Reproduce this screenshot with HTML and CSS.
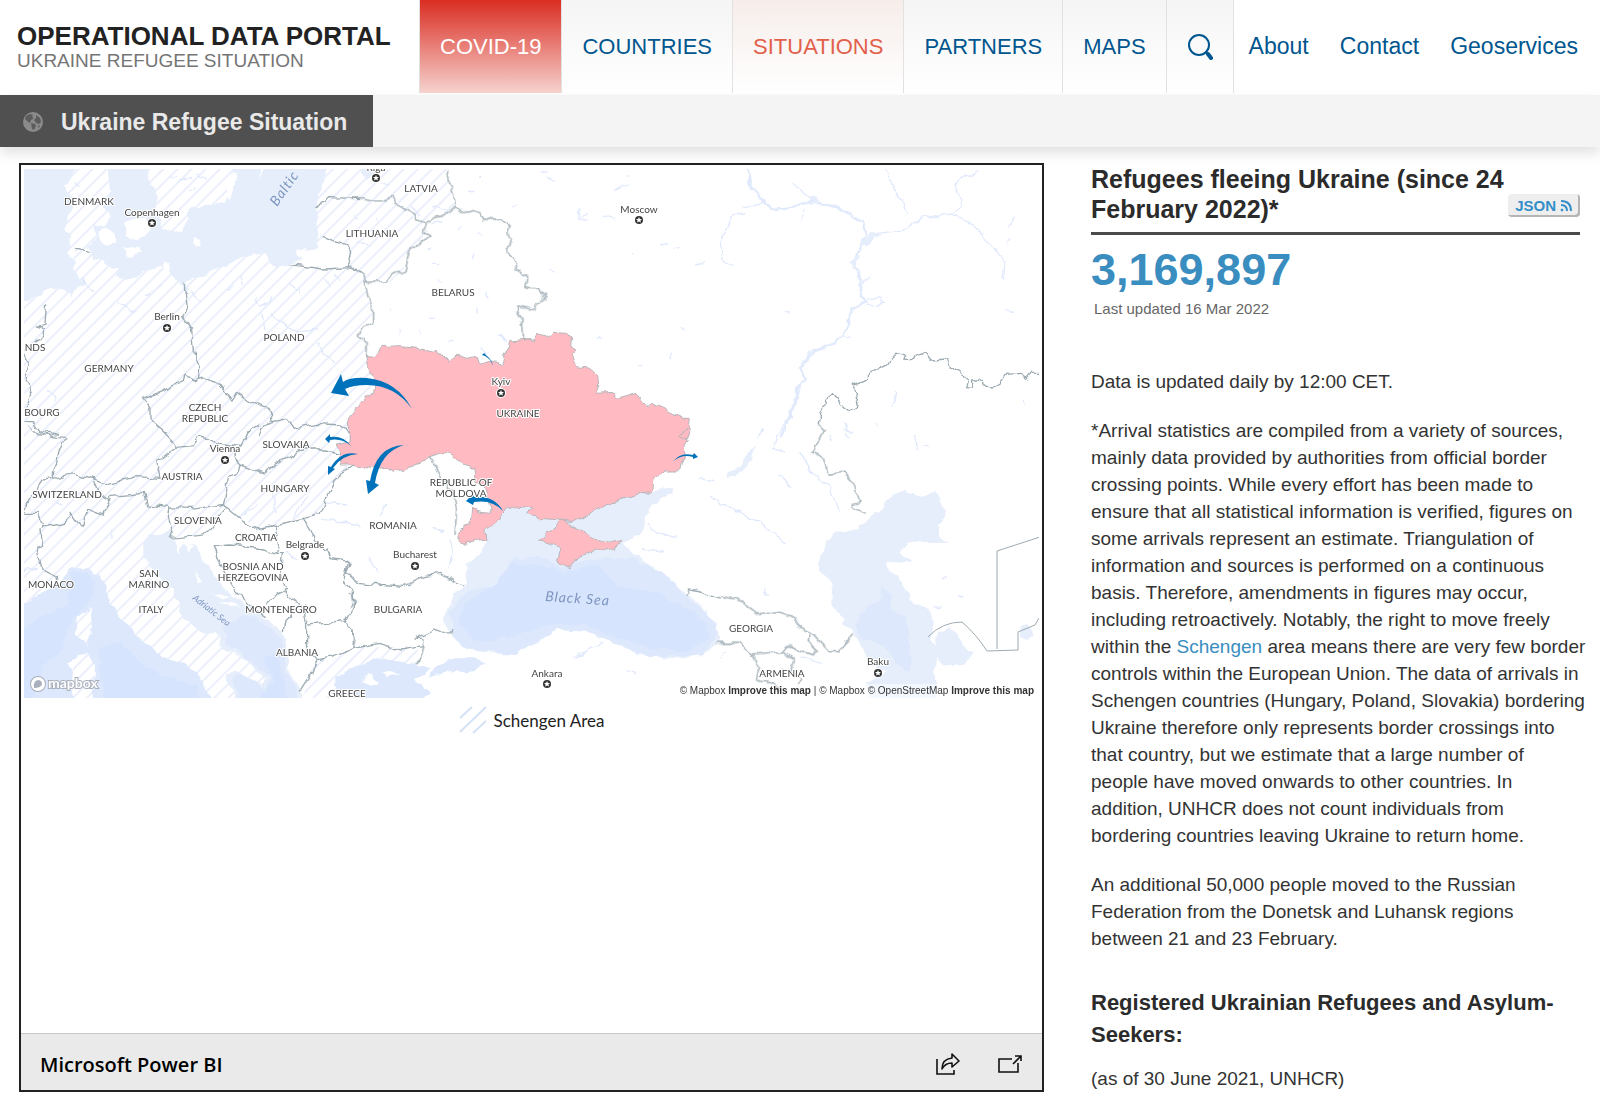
FILE: index.html
```html
<!DOCTYPE html>
<html lang="en">
<head>
    <meta charset="UTF-8">
    <meta name="viewport" content="width=device-width, initial-scale=1.0">
    <title>Situation Ukraine Refugee Situation</title>
    <link rel="stylesheet" href="styles.css">
</head>
<body>
    <header class="header">
        <div class="topbar">
            <div class="brand">
                <div class="brand-title">OPERATIONAL DATA PORTAL</div>
                <div class="brand-subtitle">UKRAINE REFUGEE SITUATION</div>
            </div>
            <nav class="nav">
                <a class="nav-item nav-covid" href="#">COVID-19</a>
                <a class="nav-item" href="#">COUNTRIES</a>
                <a class="nav-item nav-active" href="#">SITUATIONS</a>
                <a class="nav-item" href="#">PARTNERS</a>
                <a class="nav-item" href="#">MAPS</a>
                <button class="nav-item nav-search" type="button" aria-label="Search">
                    <svg width="26" height="28" viewBox="0 0 26 28" fill="none" stroke="#00568f" stroke-linecap="round">
                        <circle cx="12" cy="12" r="10" stroke-width="2"/>
                        <path d="M19 19l2 2" stroke-width="2"/>
                        <path d="M21 21l3 4" stroke-width="4"/>
                    </svg>
                </button>
            </nav>
            <nav class="links">
                <a href="#">About</a>
                <a href="#">Contact</a>
                <a href="#">Geoservices</a>
            </nav>
        </div>
        <div class="subbar">
            <a class="tab" href="#">
                <svg width="20" height="20" viewBox="0 0 20 20">
                    <circle cx="10" cy="10" r="10" fill="#8b8b8b"/>
                    <path d="M3 4l4-2 3 1-1 2 2 1-3 2-1 3-3-2-2-2zM8 11l4 1 1 2-2 4-2-1zM13 3l4 3 1 4-2 2-3-1-2-3 2-2zM15 14l2-1-1 3z" fill="#5c5c5c"/>
                </svg>
                <span>Ukraine Refugee Situation</span>
            </a>
        </div>
    </header>

    <main class="content">
        <section class="report">
            <div class="map">
                <svg class="map-canvas" viewBox="24 169 1015 529" role="img" aria-label="Refugee movements from Ukraine">
                    <defs>
                        <pattern id="hatch" width="10" height="10" patternUnits="userSpaceOnUse" patternTransform="rotate(45)">
                            <path d="M5 0V10" stroke="#d8e0fa" stroke-width="1"/>
                        </pattern>
                        <filter id="rough" filterUnits="userSpaceOnUse" x="0" y="150" width="1060" height="570">
                            <feTurbulence type="fractalNoise" baseFrequency="0.09" numOctaves="2" seed="4"/>
                            <feDisplacementMap in="SourceGraphic" scale="8" xChannelSelector="R" yChannelSelector="G"/>
                        </filter>
                        <g id="city">
                            <circle r="5" fill="#fff"/>
                            <circle r="4" fill="#333"/>
                            <path d="M0-3L.9-1 3-.9 1.4.5 1.9 2.6 0 1.5-1.9 2.6-1.4.5-3-.9-.9-1z" fill="#fff"/>
                        </g>
                    </defs>

                    <!-- Schengen area -->
                    <path fill="url(#hatch)" d="M14 159H447V180L456 207 423 223 430 235 410 252 403 270 390 282 365 282 373 308V323L358 335 367 347V355L375 385 350 415V433L338 452 352 465 340 473 325 502 317 515 277 525 257 528 227 508 205 535 172 538 180 600 250 640 290 710H14z"/>
                    <path fill="url(#hatch)" d="M312 662L360 647 417 647 420 658 400 710H300z"/>

                    <g filter="url(#rough)">
                        <!-- north west seas -->
                        <g transform="translate(10 155) scale(.3333)">
                            <path class="sea" d="M12 12H215L165 95 175 120 190 130 180 170 165 220 180 250 175 290 195 320 185 340 200 350 210 380 235 385 225 395 190 400 180 425 150 400 110 405 90 425 12 440z"/>
                            <path class="sea" d="M290 12H405L420 90 440 105 445 130 430 150 445 190 455 225 490 230 520 225 530 190 525 175 550 155 610 150 640 140 650 110 665 70 680 12H942L940 80 920 160 920 230 930 275 910 285 860 280 858 300 885 315 840 330 800 340 780 320 765 290 700 305 640 335 580 360 550 375 530 385 540 410 520 400 500 375 480 350 455 335 400 350 370 370 340 375 320 360 330 340 290 335 270 320 245 310 245 290 235 275 250 260 260 240 250 215 285 215 300 190 285 150 300 110z"/>
                            <path class="land" d="M345 205L365 190 410 190 425 220 400 245 375 255 350 240zM265 230L290 220 315 240 315 265 290 270 270 255zM340 280L390 275 395 295 360 305zM550 248L573 255 570 272 555 268zM655 140L684 60 672 50 645 110zM455 320L485 325 480 350 460 345zM750 12H765L755 72zM858 282L915 286 932 277 940 245 965 260 1010 268 1025 290 1015 338 940 342 838 328 885 315z"/>
                            <path class="lake" d="M480 70L500 60M510 85L530 65M520 75L550 70M560 60L590 80M540 110L560 95M190 80L210 95M950 370L960 400M975 360L990 380M840 380L860 410M870 400L865 420M690 360L700 390M650 410L670 390M405 420L430 405M440 400L450 390M540 410L570 440"/>
                            <path class="river" d="M210 370L250 410M320 445L380 475M780 475L820 505 870 530 925 525M925 565L945 600 970 625M735 430L755 460 790 425M755 480L765 520M110 705L140 735"/>
                        </g>
                        <!-- Adriatic and Tyrrhenian -->
                        <g transform="translate(10 425) scale(.3333)">
                            <path class="mid" d="M12 550L90 510 150 470 190 430 240 430 280 465 300 540 340 585 390 640 460 695 510 710 560 740 590 790 620 850H12z"/>
                            <path class="deep" d="M12 620L130 560 170 540 190 440 230 440 260 470 230 540 180 590 150 680 100 720 60 850H12zM265 670L330 650 400 720 480 760 560 780 570 850H290L270 750z"/>
                            <path class="land" d="M240 545L245 600 230 660 195 630 200 575 235 560zM230 680L255 720 250 850H185L195 740 170 710z"/>
                            <path class="sea" d="M400 345L420 335 480 315 495 345 510 390 520 350 560 370 600 430 650 500 720 545 760 575 815 625 835 680 830 720 870 790 880 850H680L670 800 650 760 660 740 700 745 760 785 768 760 700 700 625 660 630 630 570 620 520 575 490 500 430 430 400 400z"/>
                            <path class="mid" d="M640 610L700 570 760 590 810 640 820 720 860 790 860 850H700L680 800 670 755 700 750 765 795 780 755 700 690 650 660z"/>
                            <path class="deep" d="M760 700L800 690 820 760 840 850H730L760 800 790 770z"/>
                            <path class="land" d="M525 350L545 365 540 385zM550 440L580 470 570 475zM600 500L660 520 640 525zM630 530L690 545 660 550z"/>
                            <path class="river" d="M690 270L740 240M795 180V265M850 275L890 210M20 440L80 430M130 230L160 240M305 310L310 340M950 230L1010 240M940 280L1050 300M830 380L860 400"/>
                        </g>
                        <!-- Black Sea, Azov, Aegean -->
                        <g transform="translate(350 425) scale(.3333)">
                            <path class="sea" d="M500 240L560 240 570 280 640 290 700 275 760 240 850 205 905 200 965 185 965 205 900 240 890 280 870 330 820 350 850 385 900 420 950 450 1005 505 1065 550 1100 600 1105 650 1060 690 980 700 900 695 850 680 800 655 750 640 720 620 620 615 540 650 500 690 420 685 340 670 300 620 275 580 300 545 310 510 345 480 350 420 395 385 410 350 405 320 440 290 470 250z"/>
                            <path class="mid" d="M490 400L570 395 640 425 740 400 850 400 950 450 1000 510 1070 560 1105 620 1060 690 900 695 800 655 720 620 620 615 500 690 340 670 310 630 300 560 350 500 430 480z"/>
                            <path class="deep" d="M480 420L570 420 640 440 740 415 800 480 900 500 1000 540 1060 590 1080 640 1000 680 900 670 800 640 720 600 600 600 500 630 380 650 330 600 340 540 400 500 440 470z"/>
                            <path class="mid" d="M-45 760L0 730 90 700 180 715 240 730 195 770 240 800 200 850H-30zM250 735L300 700 380 700 410 715 370 735 300 745 240 755z"/>
                            <path class="land" d="M30 765L60 750 90 770 60 780zM90 740L150 745 110 755z"/>
                            <path class="river" d="M240 300L280 320M300 340L310 380 300 430M60 400L80 440M90 270L110 240M670 700L720 670 760 655M830 740L860 745M1090 170L1050 160M890 300L930 330 980 330M880 370L940 380"/>
                        </g>
                        <!-- Caspian Sea -->
                        <g transform="translate(710 425) scale(.3333)">
                            <path class="sea" d="M585 198L620 212 680 208 710 255 690 300 690 335 725 352 600 350 570 385 600 415 530 410 528 430 570 460 600 525 660 555 672 590 665 640 685 680 675 740 678 850H470L475 770 530 740 480 720 450 650 400 590 365 530 365 480 320 420 345 360 370 325 440 315 500 265 540 215z"/>
                            <path class="sea" d="M680 630L720 605 745 630 755 665 790 690 770 715 700 722 675 690zM930 600L960 595 970 630 945 650 925 635zM50 160L60 140 90 130 100 100 140 62 110 125 100 145 75 150z"/>
                            <path class="mid" d="M515 490L545 510 545 550 590 580 600 640 600 735 580 735 520 660 460 640 440 610 445 570 510 530z"/>
                            <path class="river" d="M220 0L190 70 225 82M0 210L30 242 80 255 160 300 230 355M270 85L300 135 360 190 395 265M205 150L240 185M270 700L340 715M30 700L50 680M150 40L160 15M620 30L625 80M165 490L172 510M220 730L250 745M670 550L690 545"/>
                            <path class="lake" d="M360 30L365 45M400 10L430 20M405 25L420 35M640 60L655 70M750 515L760 520M695 458L710 458"/>
                        </g>
                        <!-- Volga basin -->
                        <g transform="translate(710 155) scale(.3333)">
                            <path class="volga" d="M105 12L120 90 165 140 195 165 270 150 310 135 385 158 430 190 455 195 470 240 450 275 430 330 455 385 450 425 470 440 425 460 400 540 375 565 310 590 270 640 285 670 265 700 265 725 240 770 215 850"/>
                            <path class="sea" d="M450 270L490 230 510 240 480 270zM418 315L450 300 440 330 425 345zM295 125L320 125 335 150zM645 185L675 175 690 190 660 190zM445 390L485 358 460 390zM290 590L312 590 300 602z"/>
                            <path class="river" d="M500 235L590 225 605 205 650 185 730 180 800 215 830 260 860 290 885 320 880 370M730 180L755 150 735 90 760 65 805 50M518 12L545 90 570 130 595 175M105 172L60 190 30 260 40 320 70 332M165 140L100 158M245 85L310 135M290 165L275 200M470 430L510 428 520 445 500 458 470 450M895 220L920 180M890 265L900 250M885 460L915 480M225 465L237 472 237 480M400 545L420 550M545 755L555 715M940 735L942 748M500 805L510 810M400 800L420 830"/>
                        </g>
                        <!-- small lakes of the Baltics, Belarus and Russia -->
                        <g transform="translate(350 155) scale(.3333)">
                            <path class="sea" d="M28 12H100L90 60 55 72 30 60z"/>
                            <path class="lake" d="M575 50L600 45M590 70L615 75M790 105L835 85M825 60L835 55M685 165L690 190 720 180M700 195L715 195M755 180L790 195M600 340L615 355M1030 330L1065 325M930 270L960 265M970 285L985 280M850 290L845 298M490 160L500 148M385 70L395 60M355 110L370 105M250 325L265 325M375 300L370 315M265 375L275 378M385 235L400 245M330 215L325 225M230 290L240 285M185 155L210 180M250 150L290 165M245 205L275 200M120 460L125 465M145 525L152 535M230 490L250 490M380 455L382 475M450 540L465 565M295 560L310 560M205 525L210 535M410 415L415 430M990 510L1000 520M960 610L965 590M745 545L755 545M870 625L880 625M80 190L85 200M20 265L60 270M15 185L30 195"/>
                            <path class="river" d="M90 80L120 90M450 540L470 565M395 575L410 605"/>
                        </g>

                        <!-- Ukraine -->
                        <g class="ukraine">
                            <path transform="translate(350 155) scale(.3333)" d="M-5 860V790L55 720 75 710 70 665 55 635 50 600 75 605 95 575 150 572 200 577 260 590 262 602 290 605 295 615 320 600 345 612 378 605 385 625 420 615 440 620 455 635 462 600 480 562 530 555 555 560 565 535 590 545 610 532 648 535 665 555 662 575 683 590 665 603 678 635 720 640 740 660 745 715 790 712 810 730 860 715 890 758 905 745 960 770 1000 790 1018 790 1015 815 1020 830 1008 860"/>
                            <path transform="translate(350 425) scale(.3333)" d="M1010 10L990 35 1012 45 1000 65 1003 100 995 135 940 135 910 160 905 200 860 205 800 225 760 240 730 260 700 275 670 290 630 285 570 280 530 268 545 245 500 240 470 250 440 290 405 318 408 345 375 350 345 358 320 340 335 315 360 295 365 250 390 258 420 262 415 225 400 180 378 170 375 128 335 115 300 90 280 83 235 95 210 115 130 145 100 125 60 130 0 120 -25 120 -35 85 -35 60 -5 50 -5 10"/>
                            <path transform="translate(350 425) scale(.3333)" d="M568 345L600 320 640 285 665 300 700 315 725 345 770 350 810 340 800 370 765 375 740 375 700 390 660 428 625 410 635 370 610 355z"/>
                        </g>

                        <!-- borders -->
                        <g class="border">
                            <path transform="translate(10 155) scale(.3333)" d="M400 730L440 715 520 680 525 660 550 675 580 665 640 700 665 740 680 715 730 750 780 765 790 800 830 790 850 820 920 805 990 810 1015 830M400 730L420 760 420 790 440 810 470 835M790 800L760 810 745 840M522 382L532 460 518 485 545 520 550 590 570 640 565 672M110 448L105 505 80 510 100 520 100 545 80 565M42 600L52 625 42 660 62 715 45 770M42 800L70 800 90 828 150 838M192 283L215 285 240 292M835 328L940 342 1015 338 1025 290 1010 268 965 260 935 245M920 162L950 128 1050 130M1015 338L1050 348"/>
                            <path transform="translate(350 155) scale(.3333)" d="M0 130L30 128 60 138 100 138 125 125 135 148 170 160 200 185 220 205 250 190 285 185 318 155 350 172 375 165 395 198 430 185 460 195 480 215 472 240 482 265 468 292 490 310 500 345 530 365 528 395 565 400 585 432 545 465 500 455 500 470 518 500 520 545 528 558M297 42L288 80 305 95 318 155M220 205L218 235 240 242 225 255 180 285 165 345 120 368 110 380 45 382M0 335L42 358 50 410 68 460 68 505 30 525 25 540 52 565 50 605"/>
                            <path transform="translate(10 425) scale(.3333)" d="M60 5L70 20 165 38 150 70 130 150 130 160 95 165 80 200 50 230 45 265 85 265 100 305 165 295 180 260 212 305 235 250 280 268 300 220 270 205 250 160 190 145 130 160M250 160L290 175 380 155 450 160 440 110 500 70 495 55 440 0M500 70L550 65 570 35 630 55 665 60 690 65 720 20 750 0M690 65L675 90 690 120 760 145 830 100 880 75 950 75 985 85M690 120L685 145 655 155 650 200 640 235 545 250 480 248 410 240 400 205 300 215M480 248L475 270 490 330 485 340 585 330 600 310 650 250 640 235M650 250L700 290 740 312 800 300 880 280 930 270 960 200 990 145 1030 120M100 305L90 315 95 365 80 370 95 430 140 455 130 470M770 575L730 550 680 500 625 405 610 365 660 360 760 372 800 385 820 385 815 440 830 490 790 510 770 545M795 300L805 360 800 385M880 280L905 320 910 350 950 370 960 400 1015 410 1000 470 1030 500 1030 545 1005 590 895 600M820 490L840 520 880 540 890 600 890 670 920 700 905 745 870 800M1005 590L1030 630 1030 670 980 690 920 705M845 570L825 590 820 625M1005 405L1020 415 1010 440 1035 470 1050 465"/>
                            <path transform="translate(350 425) scale(.3333)" d="M235 95L260 130 270 155 310 200 320 250 315 330M0 445L15 470 90 480 160 488 220 455 270 448 340 480M0 510L15 525 0 545M0 615L15 640 10 670 90 655 150 675 200 668 225 665 215 640 195 640 250 615 270 622 308 620M225 665L212 700 192 718M1007 510L1015 492 1050 498 1110 520"/>
                            <path transform="translate(710 155) scale(.3333)" d="M990 652L965 652 950 670 930 655 890 658 870 685 843 700 810 675 785 675 785 700 770 698 775 675 725 640 715 615 665 618 648 592 615 605 610 615 585 612 590 600 558 592 545 605 530 630 475 655 475 675 430 695 445 750 420 770 400 755 368 712 352 735 355 750 330 768 325 810"/>
                            <path transform="translate(710 425) scale(.3333)" d="M325 0L340 20 308 82 340 100 355 148 400 142 430 175 453 230 425 235 430 248 465 265M30 512L90 525 150 572 210 562 262 580 260 605 320 635 360 680 385 680 410 655 428 628M18 655L85 655 130 687 220 680 235 662 310 690 318 670 295 650 298 628M130 687L145 730 140 765 180 775 210 795M220 680L250 705 240 735 275 765 265 780"/>
                        </g>
                    </g>
                    <path class="border border-straight" d="M1040 537L997 551V649M928 637Q942 622 962 622 976 634 987 651L1018 650V632L1035 625 1039 618"/>
                    <!-- Corsica and Sardinia -->
                    <path fill="url(#hatch)" d="M90 607L92 625 87 645 75 635 77 617 88 612zM87 652L95 665 93 710H72L75 672 67 662z"/>

                    <!-- movement arrows -->
                    <g fill="#0072bc">
                        <path d="M331 393L341 374 343 382Q350 377 367 378 397 381 412 409 395 385 367 385 353 385 345 389L349 396z"/>
                        <path d="M404 445Q376 446 370 481L366 480 368 494 379 485 375 483Q380 452 404 445z"/>
                        <path d="M503 511Q494 495 474 497L473 494 466 501 473 505 474 502Q492 499 503 511z"/>
                        <path d="M351 446Q343 435 330 437L330 434 325 439 329 443 330 440Q342 438 351 446z"/>
                        <path d="M358 454Q341 450 331 467L328 466 328 475 335 469 333 468Q342 455 358 454z"/>
                        <path d="M674 461Q680 452 693 455L694 453 698 457 693 459 693 457Q682 454 674 461z"/>
                        <path d="M493 366Q490 358 485 356L482 355 484 353 487 356Q492 360 493 366z"/>
                    </g>

                    <g>
                        <use href="#city" x="152" y="223"/>
                        <use href="#city" x="167" y="328"/>
                        <use href="#city" x="376" y="178"/>
                        <use href="#city" x="639" y="220"/>
                        <use href="#city" x="501" y="393"/>
                        <use href="#city" x="225" y="460"/>
                        <use href="#city" x="305" y="556"/>
                        <use href="#city" x="415" y="566"/>
                        <use href="#city" x="547" y="684"/>
                        <use href="#city" x="878" y="673"/>
                    </g>

                    <g class="label">
                        <text x="89" y="205">DENMARK</text>
                        <text x="152" y="216">Copenhagen</text>
                        <text x="167" y="320">Berlin</text>
                        <text x="284" y="341">POLAND</text>
                        <text x="109" y="372">GERMANY</text>
                        <text x="35" y="351">NDS</text>
                        <text x="42" y="416">BOURG</text>
                        <text x="205" y="411">CZECH</text>
                        <text x="205" y="422">REPUBLIC</text>
                        <text x="376" y="171">Riga</text>
                        <text x="421" y="192">LATVIA</text>
                        <text x="372" y="237">LITHUANIA</text>
                        <text x="639" y="213">Moscow</text>
                        <text x="453" y="296">BELARUS</text>
                        <text x="501" y="385">Kyiv</text>
                        <text x="518" y="417">UKRAINE</text>
                        <text x="286" y="448">SLOVAKIA</text>
                        <text x="225" y="452">Vienna</text>
                        <text x="182" y="480">AUSTRIA</text>
                        <text x="285" y="492">HUNGARY</text>
                        <text x="67" y="498">SWITZERLAND</text>
                        <text x="198" y="524">SLOVENIA</text>
                        <text x="256" y="541">CROATIA</text>
                        <text x="305" y="548">Belgrade</text>
                        <text x="253" y="570">BOSNIA AND</text>
                        <text x="253" y="581">HERZEGOVINA</text>
                        <text x="149" y="577">SAN</text>
                        <text x="149" y="588">MARINO</text>
                        <text x="51" y="588">MONACO</text>
                        <text x="151" y="613">ITALY</text>
                        <text x="281" y="613">MONTENEGRO</text>
                        <text x="297" y="656">ALBANIA</text>
                        <text x="347" y="697">GREECE</text>
                        <text x="393" y="529">ROMANIA</text>
                        <text x="461" y="486">REPUBLIC OF</text>
                        <text x="461" y="497">MOLDOVA</text>
                        <text x="415" y="558">Bucharest</text>
                        <text x="398" y="613">BULGARIA</text>
                        <text x="547" y="677">Ankara</text>
                        <text x="751" y="632">GEORGIA</text>
                        <text x="782" y="677">ARMENIA</text>
                        <text x="878" y="665">Baku</text>
                    </g>
                    <g class="water-label">
                        <text transform="translate(277 207) rotate(-55)">Baltic</text>
                        <text transform="translate(545 601) rotate(4)">Black Sea</text>
                        <text class="water-small" transform="translate(192 599) rotate(38)">Adriatic Sea</text>
                    </g>

                    <g class="mapbox-logo">
                        <circle cx="38" cy="684" r="7"/>
                        <path class="mapbox-mark" d="M34 688Q33 680 39 680 42 681 42 684 41 688 34 688z"/>
                        <text x="48" y="688">mapbox</text>
                    </g>
                </svg>
                <div class="attribution">
                    <a href="#">© Mapbox</a> <a class="improve" href="#">Improve this map</a> | <a href="#">© Mapbox</a> <a href="#">© OpenStreetMap</a> <a class="improve" href="#">Improve this map</a>
                </div>
            </div>

            <div class="legend">
                <svg width="28" height="28" viewBox="0 0 28 28" stroke="#d4e2f8" stroke-width="2">
                    <path d="M1 12L13 1M1 26L27 1M14 27L27 15"/>
                </svg>
                <span>Schengen Area</span>
            </div>

            <footer class="report-footer">
                <a class="report-title" href="#">Microsoft Power BI</a>
                <div class="report-actions">
                    <button class="icon-btn" type="button" aria-label="Share">
                        <svg width="26" height="24" viewBox="0 0 26 24" fill="none" stroke="#111" stroke-width="1.6">
                            <path d="M2 7V22H19V18"/>
                            <path d="M7 17Q7 7 17 6V2L24 9 17 15V11Q10 11 7 17z" stroke-linejoin="round"/>
                        </svg>
                    </button>
                    <button class="icon-btn" type="button" aria-label="Full screen">
                        <svg width="26" height="24" viewBox="0 0 26 24" fill="none" stroke="#111" stroke-width="1.6">
                            <path d="M15 7H2V20H21V11M16 12L24 4M18 4H24V9"/>
                        </svg>
                    </button>
                </div>
            </footer>
        </section>

        <aside class="sidebar">
            <div class="figure-head">
                <h2>Refugees fleeing Ukraine (since 24 February 2022)*</h2>
                <button class="json-btn" type="button">JSON
                    <svg width="13" height="13" viewBox="0 0 13 13" fill="none" stroke="#338ec9" stroke-width="2">
                        <circle cx="2" cy="11" r="1" fill="#338ec9" stroke-width="1"/>
                        <path d="M1 6Q7 6 7 12M1 2Q11 2 11 12"/>
                    </svg>
                </button>
            </div>
            <div class="total">3,169,897</div>
            <div class="updated">Last updated 16 Mar 2022</div>

            <div class="notes">
                <p>Data is updated daily by 12:00 CET.</p>
                <p>*Arrival statistics are compiled from a variety of sources, mainly data provided by authorities from official border crossing points. While every effort has been made to ensure that all statistical information is verified, figures on some arrivals represent an estimate. Triangulation of information and sources is performed on a continuous basis. Therefore, amendments in figures may occur, including retroactively. Notably, the right to move freely within the <a href="#">Schengen</a> area means there are very few border controls within the European Union. The data of arrivals in Schengen countries (Hungary, Poland, Slovakia) bordering Ukraine therefore only represents border crossings into that country, but we estimate that a large number of people&nbsp;have moved onwards to other countries. In addition, UNHCR does not count individuals from bordering&nbsp;countries leaving Ukraine to return home.</p>
                <p>An additional 50,000 people moved to the Russian Federation from the Donetsk and Luhansk regions between 21 and 23 February.</p>
                <h3>Registered Ukrainian Refugees and Asylum-Seekers:</h3>
                <p>(as of 30 June 2021, UNHCR)</p>
            </div>
        </aside>
    </main>
</body>
</html>
```

FILE: styles.css
```css
* {
    margin: 0;
    padding: 0;
    box-sizing: border-box;
}

body {
    font-family: "Liberation Sans", Arial, sans-serif;
    background: #fff;
    color: #333;
}

a {
    color: inherit;
    text-decoration: none;
}

button {
    font-family: inherit;
    cursor: pointer;
}

/* Header */

.topbar {
    display: flex;
    height: 93px;
}

.brand {
    flex: 0 0 419px;
    padding: 21px 0 0 17px;
    white-space: nowrap;
}

.brand-title {
    font-size: 26px;
    font-weight: bold;
    line-height: 30px;
    color: #222;
}

.brand-subtitle {
    font-size: 19px;
    line-height: 20px;
    color: #757575;
}

.nav {
    display: flex;
    border-left: 1px solid #e2e2e2;
}

.nav-item {
    display: flex;
    align-items: center;
    padding: 0 20px;
    border: 0;
    border-right: 1px solid #e2e2e2;
    background: linear-gradient(#f5f5f5, #fff);
    color: #00568f;
    font-size: 22px;
}

.nav-covid {
    background: linear-gradient(#da2d22, #f6d2ce);
    color: #fff;
}

.nav-active {
    background: linear-gradient(#f6edea, #fff);
    color: #e2604a;
}

.links {
    display: flex;
    flex: 1;
    align-items: center;
    justify-content: space-between;
    padding: 0 22px 0 15px;
    color: #00568f;
    font-size: 23px;
}

.subbar {
    display: flex;
    height: 52px;
    margin-top: 2px;
    background: #f4f4f4;
    box-shadow: 0 6px 12px rgba(0, 0, 0, 0.12);
}

.tab {
    display: flex;
    align-items: center;
    gap: 18px;
    padding: 2px 26px 0 23px;
    background: #505050;
    color: #e9e9e9;
    font-size: 23px;
    font-weight: bold;
}

/* Page body */

.content {
    display: grid;
    grid-template-columns: 1025fr 496fr;
    align-items: start;
    gap: 47px;
    padding: 16px 13px 0 19px;
}

.report {
    display: flex;
    flex-direction: column;
    min-height: calc(100vh - 184px);
    border: 2px solid #222;
    background: #fff;
}

.map {
    position: relative;
    margin: 4px 3px 0;
}

.map-canvas {
    display: block;
    width: 100%;
}

.sea {
    fill: #e6eefc;
}

.mid {
    fill: #dde8fd;
}

.deep {
    fill: #d6e4fe;
}

.land {
    fill: #fff;
}

.river,
.lake {
    fill: none;
    stroke: #dfe8fc;
    stroke-width: 4;
}

.volga {
    fill: none;
    stroke: #e1eafc;
    stroke-width: 8;
}

.ukraine {
    fill: #ffbbc1;
    stroke: #b5b5bb;
    stroke-width: 3;
}

.border {
    fill: none;
    stroke: #9caab2;
    stroke-width: 4;
}

.border-straight {
    stroke-width: 1;
}

.label {
    fill: #444;
    stroke: #fff;
    stroke-width: 2px;
    stroke-linejoin: round;
    paint-order: stroke;
    font-family: Lato, sans-serif;
    font-size: 10px;
    text-anchor: middle;
}

.water-label {
    fill: #7d95bf;
    font-family: Lato, sans-serif;
    font-size: 14px;
    font-style: italic;
    letter-spacing: 1px;
}

.water-small {
    font-size: 9px;
    letter-spacing: 0;
}

.mapbox-logo {
    fill: #fff;
    stroke: #a9afbc;
    stroke-width: 2px;
    paint-order: stroke;
    font-family: Lato, sans-serif;
    font-size: 14px;
    font-weight: bold;
}

.mapbox-mark {
    fill: #a9afbc;
    stroke: none;
}

.attribution {
    position: absolute;
    right: 0;
    bottom: 0;
    padding: 0 5px;
    background: rgba(255, 255, 255, 0.5);
    color: #333;
    font-size: 10px;
    line-height: 14px;
    white-space: nowrap;
}

.improve {
    font-weight: bold;
}

.legend {
    display: flex;
    align-items: center;
    justify-content: center;
    gap: 7px;
    margin-top: 8px;
    color: #222;
    font-family: Lato, sans-serif;
    font-size: 17px;
}

.report-footer {
    display: flex;
    align-items: center;
    justify-content: space-between;
    height: 57px;
    margin-top: auto;
    padding: 4px 19px 0;
    border-top: 1px solid #c8c8c8;
    background: #eaeaea;
}

.report-title {
    color: #000;
    font-family: "Open Sans", sans-serif;
    font-size: 20px;
    font-weight: 600;
}

.report-actions {
    display: flex;
    gap: 36px;
}

.icon-btn {
    display: flex;
    border: 0;
    background: none;
}

/* Sidebar */

.figure-head {
    display: flex;
    align-items: flex-end;
    justify-content: space-between;
    margin-right: 7px;
    padding: 1px 0 5px;
    border-bottom: 3px solid #4a4a4a;
}

.figure-head h2 {
    padding-bottom: 3px;
    font-size: 25px;
    line-height: 30px;
    color: #2b2b2b;
}

.json-btn {
    display: flex;
    flex: none;
    align-items: center;
    gap: 4px;
    height: 23px;
    margin-bottom: 10px;
    padding: 0 7px;
    border: 0;
    border-radius: 4px;
    background: #eee;
    box-shadow: inset -2px -2px 0 #b5b5b5;
    color: #338ec9;
    font-size: 15px;
    font-weight: bold;
}

.total {
    margin-top: 10px;
    color: #3a8dbf;
    font-size: 45px;
    font-weight: bold;
    line-height: 50px;
}

.updated {
    margin: 0 0 46px 3px;
    color: #666;
    font-size: 15px;
    line-height: 27px;
}

.notes {
    font-size: 19px;
    line-height: 27px;
}

.notes p {
    margin-bottom: 22px;
}

.notes p:last-child {
    margin-bottom: 0;
}

.notes a {
    color: #3a8dbf;
}

.notes h3 {
    margin: 35px 0 14px;
    color: #2b2b2b;
    font-size: 22px;
    line-height: 32px;
}
```
